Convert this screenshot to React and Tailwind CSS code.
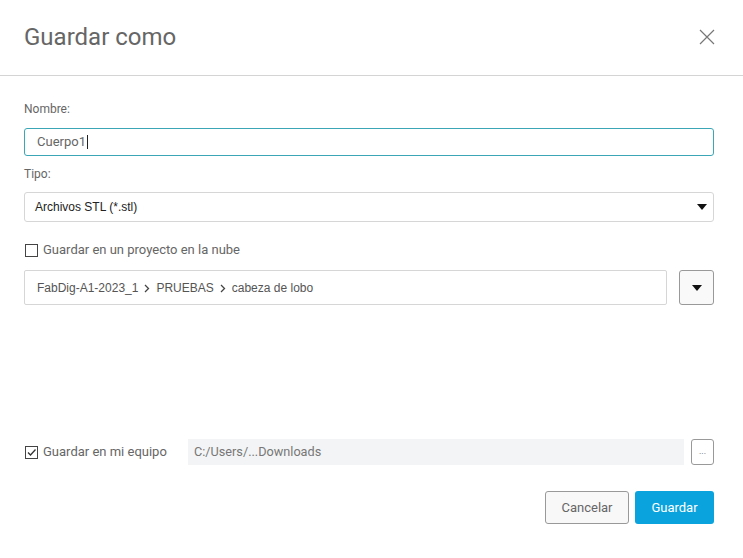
import React from "react";

function Caret() {
  return (
    <svg width="10" height="6" viewBox="0 0 10 6" className="block">
      <path d="M0 0 L10 0 L5 6 Z" fill="#111" />
    </svg>
  );
}

function Chev() {
  return (
    <svg width="6" height="9" viewBox="0 0 6 9" className="block mx-[6px] mt-[2px]">
      <path d="M1 1 L4.5 4.5 L1 8" stroke="#444" strokeWidth="1.3" fill="none" />
    </svg>
  );
}

export default function App() {
  return (
    <div className="w-[743px] h-[558px] bg-white font-['Roboto',sans-serif] text-[#666] overflow-hidden">
      <div className="h-[76px] flex items-center justify-between pl-6 pr-[28px] border-b border-[#d4d4d4]">
        <div className="text-[24px] text-[#666] leading-none -mt-[1px]">Guardar como</div>
        <svg width="16" height="16" viewBox="0 0 16 16" className="block -mt-[1px]">
          <path d="M1 1 L15 15 M15 1 L1 15" stroke="#777" strokeWidth="1.2" fill="none" />
        </svg>
      </div>
      <div className="pl-6 pr-[29px]">
        <div className="mt-[25px] text-[12px] leading-4 text-[#666]">Nombre:</div>
        <div className="mt-[11px] h-[28px] border border-[#3ba6b5] rounded-[3px] flex items-center pl-[12px] text-[13px] text-[#666]">
          <span>Cuerpo1</span>
          <span className="w-px h-[14px] bg-[#222] ml-[1px]"></span>
        </div>
        <div className="mt-[10px] text-[12px] leading-4 text-[#666]">Tipo:</div>
        <div className="mt-[10px] h-[30px] border border-[#d6d6d6] rounded-[3px] flex items-center justify-between pl-[10px] pr-[6px] text-[12px] text-[#222] font-['Liberation_Sans',sans-serif]">
          <span>Archivos STL (*.stl)</span>
          <Caret />
        </div>
        <div className="mt-[18px] h-[20px] flex items-center">
          <span className="w-[13px] h-[13px] border border-[#444] ml-px"></span>
          <span className="ml-[5px] text-[13px] text-[#666]">Guardar en un proyecto en la nube</span>
        </div>
        <div className="mt-[10px] flex gap-[12px]">
          <div className="flex-1 h-[35px] border border-[#d6d6d6] rounded-[2px] flex items-center pl-[12px] text-[12px] text-[#555] font-['Liberation_Sans',sans-serif]">
            <span>FabDig-A1-2023_1</span>
            <Chev />
            <span>PRUEBAS</span>
            <Chev />
            <span>cabeza de lobo</span>
          </div>
          <div className="w-[35px] h-[35px] border border-[#999] rounded-[3px] bg-[#f9f9f9] flex items-center justify-center">
            <Caret />
          </div>
        </div>
        <div className="mt-[134px] flex items-center h-[26px]">
          <div className="w-[164px] flex items-center">
            <span className="w-[13px] h-[13px] border border-[#444] ml-px flex items-center justify-center">
              <svg width="11" height="11" viewBox="0 0 11 11" className="block">
                <path d="M2 5.5 L4.5 8 L9.5 2.5" stroke="#333" strokeWidth="1.3" fill="none" />
              </svg>
            </span>
            <span className="ml-[5px] text-[13px] text-[#666]">Guardar en mi equipo</span>
          </div>
          <div className="flex-1 h-[26px] bg-[#f3f4f5] flex items-center pl-[6px] text-[12.7px] text-[#777]">
            C:/Users/...Downloads
          </div>
          <div className="ml-[7px] w-[23px] h-[26px] border border-[#999] rounded-[3px] flex items-center justify-center text-[9px] text-[#666] leading-none pb-[2px]">
            ...
          </div>
        </div>
        <div className="mt-[26px] flex justify-end gap-[6px]">
          <div className="w-[84px] h-[33px] border border-[#999] rounded-[3px] bg-[#f8f8f8] flex items-center justify-center text-[13px] text-[#666]">
            Cancelar
          </div>
          <div className="w-[79px] h-[33px] rounded-[3px] bg-[#0aa3dd] flex items-center justify-center text-[13px] text-white">
            Guardar
          </div>
        </div>
      </div>
    </div>
  );
}
